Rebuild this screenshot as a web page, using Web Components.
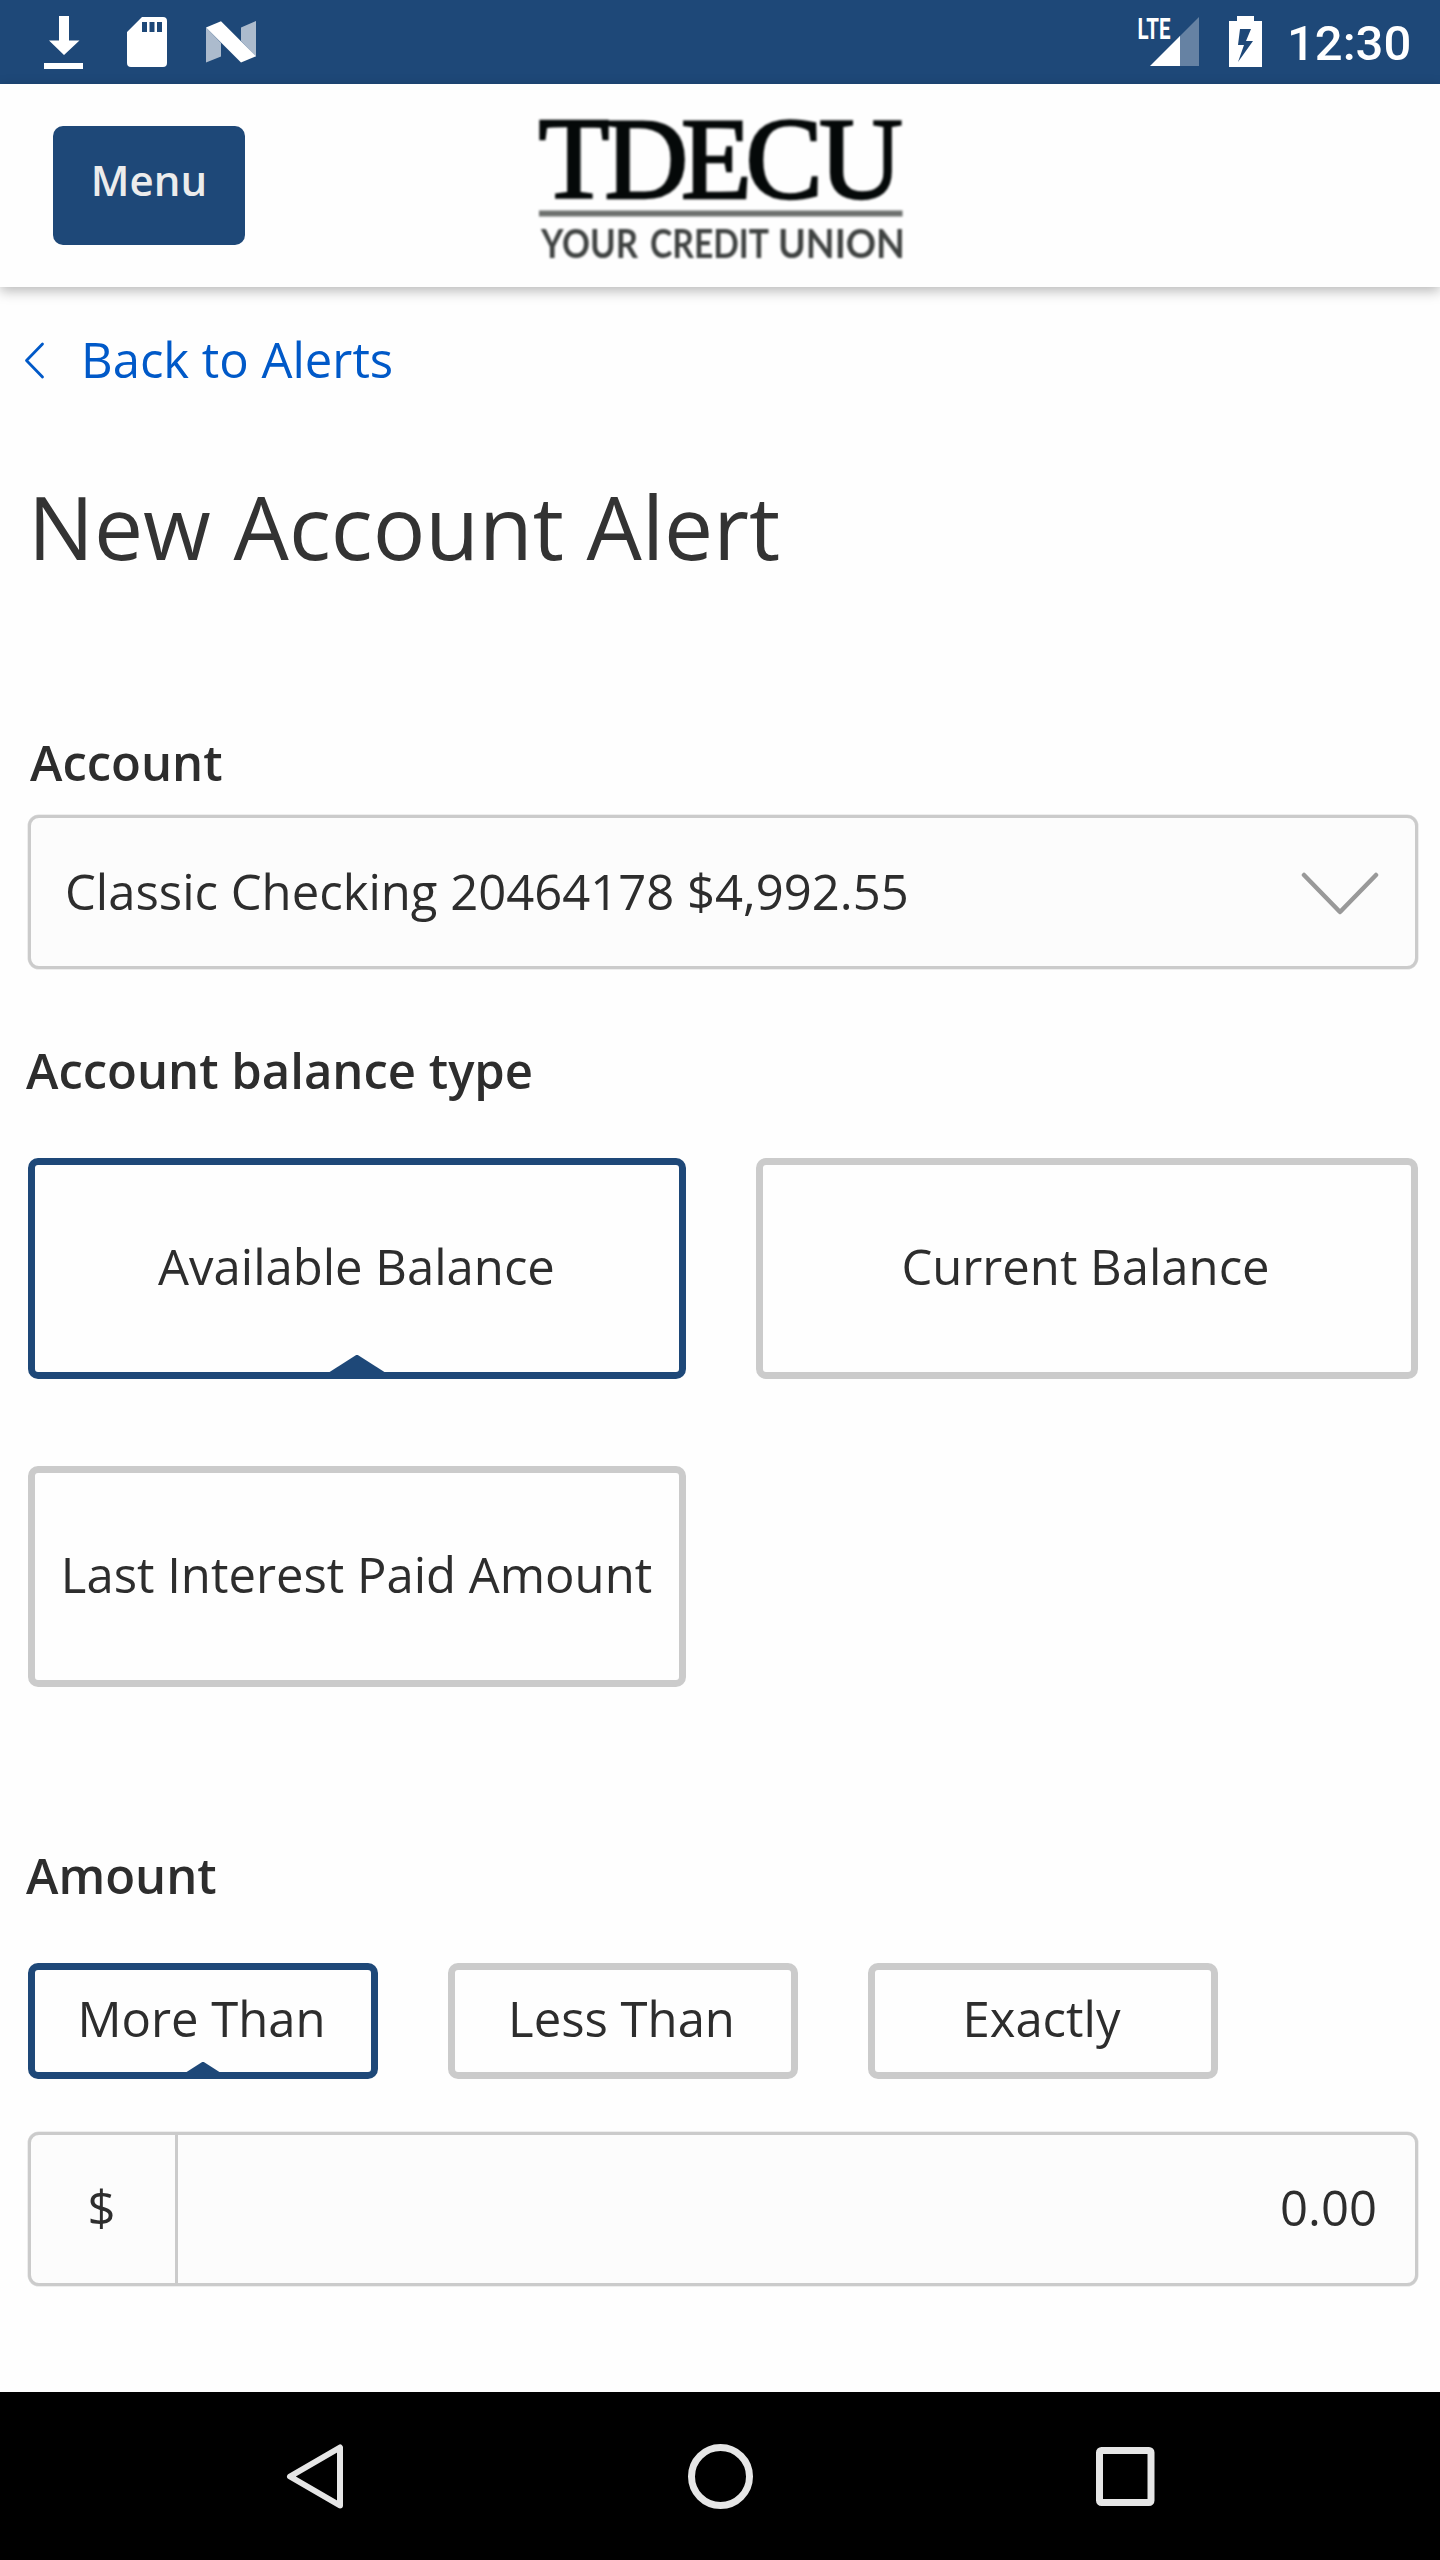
<!DOCTYPE html>
<html lang="en">
<head>
<meta charset="utf-8">
<title>New Account Alert</title>
<style>
body{margin:0;background:#fefefe;font-family:"Open Sans","Noto Sans",sans-serif;font-size:49px;line-height:68px;color:#2d2d2d;--brand:#1e4878;--line:#cbcbcb}
</style>
</head>
<body>
<alert-app></alert-app>
<script>
const define = (name, html) => {
  const template = document.createElement('template');
  template.innerHTML = html;
  customElements.define(name, class extends HTMLElement {
    constructor() {
      super();
      this.attachShadow({ mode: 'open' }).append(template.content.cloneNode(true));
    }
  });
};

define('status-bar', `
<style>
:host{display:flex;justify-content:space-between;height:84px;background:var(--brand);font-family:Roboto,sans-serif;color:#fff}
svg{display:block}
.right{display:flex}
.time{font-size:49px;font-weight:500;line-height:84px;width:153px;padding-top:1.5px;box-sizing:border-box;white-space:nowrap}
</style>
<svg width="300" height="84" fill="#fff">
  <path d="M59 16h10v24.500h10.500L64 55 49 40.500h10zM44 63h39v6H44z"/>
  <path fill-rule="evenodd" d="M142 17h21q4 0 4 4v42q0 4-4 4h-32q-4 0-4-4V32zM142 22v10h5V22zM149.500 22v10h5V22zM157 22v10h5V22z"/>
  <path opacity=".63" d="M206 27.500l15 15.500v13.500L206 62.500zM241 27.500l15-6.500v35.500L241 41z"/>
  <path d="M206 27.500L221 21.200 256 56.300 241 62.500z"/>
</svg>
<div class="right">
  <svg width="155" height="84" viewBox="1132 0 155 84" fill="#fff">
    <path opacity=".32" d="M1199 17v49h-20V37z"/><path d="M1150 66l30-30v30z"/>
    <text x="1137.500" y="39" font-family="Roboto" font-weight="700" font-size="29.500" textLength="33" lengthAdjust="spacingAndGlyphs">LTE</text>
    <path fill-rule="evenodd" d="M1237 16h17v5h8v46h-33V21h8zM1240 29l-2 16h6l-6 17 15-21h-7l5-12z"/>
  </svg>
  <div class="time">12:30</div>
</div>`);

define('credit-logo', `
<style>:host{display:block;width:390px;height:190px}svg{display:block;filter:blur(.8px)}</style>
<svg width="390" height="190" viewBox="526 85 390 190">
  <text x="538.500 604.500 681 745.500 819" y="197.500" font-family="Liberation Serif" font-size="116" fill="#050909" stroke="#050909" stroke-width="2.500">TDECU</text>
  <path fill="#6d706e" d="M539 210.500h363.500v6H539z"/>
  <text y="258" font-family="Lato" font-weight="700" font-size="40" fill="#3f4241"><tspan x="541" textLength="97" lengthAdjust="spacingAndGlyphs">YOUR</tspan> <tspan x="650" textLength="118" lengthAdjust="spacingAndGlyphs">CREDIT</tspan> <tspan x="778" textLength="127" lengthAdjust="spacingAndGlyphs">UNION</tspan></text>
</svg>`);

define('menu-button', `
<style>
:host{display:block}
button{display:block;width:192px;height:119px;border:0;border-radius:10px;background:var(--brand);color:#ececec;font:600 42px/57px "Open Sans",sans-serif;padding:0 0 13px;margin:0}
</style><button><slot></slot></button>`);

define('app-header', `
<style>
:host{display:grid;grid-template-columns:1fr 390px 1fr;align-items:start;box-sizing:border-box;height:203px;padding:0 0 0 53px;background:#fefefe;position:relative;z-index:1;box-shadow:0 4px 12px rgba(0,0,0,.28)}
menu-button{margin-top:42px}
credit-logo{margin:1px 0 0 -26px}
</style>
<menu-button>Menu</menu-button><credit-logo></credit-logo>`);

define('back-link', `
<style>
:host{display:flex;align-items:center;height:68px;color:#0059c8}
svg{display:block;margin-left:24px;margin-right:35px}
</style>
<svg width="22" height="40" viewBox="0 0 22 40" fill="none" stroke="currentColor" stroke-width="2.800" stroke-linecap="round" stroke-linejoin="round"><path d="M18.500 5L2.500 21.500 18.500 38"/></svg>
<span><slot></slot></span>`);

define('account-select', `
<style>
:host{display:flex;justify-content:space-between;align-items:center;box-sizing:border-box;height:154px;border:3px solid var(--line);border-radius:11px;background:#fcfcfc;box-shadow:0 0 0 .5px #ddd;padding:0 35px 0 34px;white-space:nowrap}
span{margin-bottom:2px}
svg{display:block;margin-top:3px}
</style>
<span><slot></slot></span>
<svg width="80" height="44" fill="none" stroke="#999" stroke-width="4.500" stroke-linecap="round" stroke-linejoin="round"><path d="M4 3l36 37L76 3"/></svg>`);

define('choice-tile', `
<style>
:host{display:flex;align-items:center;justify-content:center;box-sizing:border-box;border:7px solid var(--line);border-radius:10px;padding-bottom:5px;position:relative;white-space:nowrap}
:host([selected]){border-color:var(--brand)}
i{display:none;position:absolute;left:50%;bottom:-1px;width:var(--tip-w,58px);height:var(--tip-h,18.5px);transform:translateX(-50%);background:var(--brand);clip-path:polygon(50% 0,100% 100%,0 100%)}
:host([selected]) i{display:block}
</style><slot></slot><i></i>`);

define('amount-field', `
<style>
:host{display:flex;box-sizing:border-box;height:154px;border:3px solid var(--line);border-radius:11px;background:#fcfcfc;box-shadow:0 0 0 .5px #ddd;line-height:145px}
.unit{width:144px;box-sizing:content-box;border-right:3px solid var(--line);text-align:center;text-indent:-3px}
.value{flex:1;text-align:right;padding-right:38px}
</style>
<div class="unit">$</div><div class="value"><slot></slot></div>`);

define('nav-bar', `
<style>:host{display:grid;grid-template-columns:repeat(3,66px);justify-content:center;column-gap:338px;align-items:center;height:168px;box-sizing:border-box;background:#000}svg{display:block}</style>
<svg width="66" height="66" fill="none" stroke="#e6e6e6" stroke-width="6" stroke-linejoin="round"><path d="M7 33.500L57 4.500v58z"/></svg>
<svg width="66" height="66" fill="none" stroke="#e6e6e6" stroke-width="7"><circle cx="33.500" cy="33.500" r="29"/></svg>
<svg width="66" height="66" fill="none" stroke="#e6e6e6" stroke-width="7"><rect x="8.500" y="7.500" width="51.500" height="52" rx="2"/></svg>`);

define('alert-form', `
<style>
:host{display:flex;flex-direction:column;box-sizing:border-box;height:2105px;padding:38px 22px 0 28px}
back-link{margin-left:-28px}
h1{font-size:87.5px;line-height:120px;font-weight:400;color:#333;margin:73px 0 0;white-space:nowrap}
label{display:block;font-weight:600}
.a{margin:142px 0 19px 2px}
.b{margin:67px 0 54px -2px}
.c{margin:154px 0 54px -2px}
.types{display:grid;grid-template-columns:658px 662px;justify-content:space-between;row-gap:87px;grid-auto-rows:221px}
.types :nth-child(1){padding-right:1px}
.types :nth-child(2){padding-right:3px}
.types :nth-child(3){padding-right:1px}
.compare{display:flex;gap:70px;height:116px;margin-bottom:53px}
.compare choice-tile{width:350px;padding-right:3px;padding-bottom:7px;--tip-w:36px;--tip-h:11.5px}
</style>
<back-link>Back to Alerts</back-link>
<h1>New Account Alert</h1>
<label class="a">Account</label>
<account-select>Classic Checking 20464178 $4,992.55</account-select>
<label class="b">Account balance type</label>
<div class="types">
  <choice-tile selected>Available Balance</choice-tile>
  <choice-tile>Current Balance</choice-tile>
  <choice-tile>Last Interest Paid Amount</choice-tile>
</div>
<label class="c">Amount</label>
<div class="compare">
  <choice-tile selected>More Than</choice-tile>
  <choice-tile>Less Than</choice-tile>
  <choice-tile>Exactly</choice-tile>
</div>
<amount-field>0.00</amount-field>`);

define('alert-app', `
<style>:host{display:flex;flex-direction:column;width:1440px;height:2560px;overflow:hidden}</style>
<status-bar></status-bar><app-header></app-header><alert-form></alert-form><nav-bar></nav-bar>`);
</script>
</body>
</html>
